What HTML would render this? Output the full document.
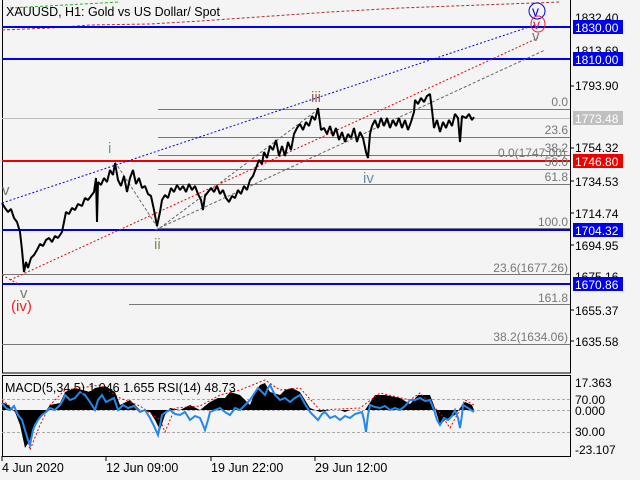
<!DOCTYPE html><html><head><style>
body{margin:0;background:#f4f4f4;width:640px;height:480px;overflow:hidden}
svg{display:block}
</style></head><body>
<svg width="640" height="480" xmlns="http://www.w3.org/2000/svg" font-family="Liberation Sans, sans-serif" font-size="12">
<rect width="640" height="480" fill="#f4f4f4"/>
<rect x="2.5" y="-1" width="568" height="374" fill="none" stroke="#000"/>
<rect x="2.5" y="375.5" width="568" height="81" fill="none" stroke="#000"/>
<polyline points="2,30 50,28 90,25 150,24 200,21 330,12 400,8 560,2" fill="none" stroke="#a33" stroke-dasharray="3,2"/>
<polyline points="10,8 120,2" fill="none" stroke="#3a3" stroke-dasharray="3,2"/>
<g stroke="#777" stroke-width="1">
<line x1="158" y1="109.5" x2="570" y2="109.5"/>
<line x1="158" y1="137.5" x2="570" y2="137.5"/>
<line x1="158" y1="155.5" x2="570" y2="155.5"/>
<line x1="158" y1="169.5" x2="570" y2="169.5"/>
<line x1="158" y1="184.5" x2="570" y2="184.5"/>
<line x1="158" y1="228.5" x2="570" y2="228.5"/>
<line x1="2" y1="274.5" x2="570" y2="274.5"/>
<line x1="129" y1="304.5" x2="570" y2="304.5"/>
<line x1="2" y1="344.5" x2="570" y2="344.5"/>
</g>
<line x1="2" y1="118.5" x2="570" y2="118.5" stroke="#bbb"/>
<g stroke-width="2">
<line x1="2" y1="27" x2="570" y2="27" stroke="#0000ee"/>
<line x1="2" y1="59" x2="570" y2="59" stroke="#0000ee"/>
<line x1="2" y1="230" x2="570" y2="230" stroke="#0000ee"/>
<line x1="2" y1="284" x2="570" y2="284" stroke="#0000ee"/>
<line x1="2" y1="161" x2="570" y2="161" stroke="#ee0000"/>
</g>
<line x1="2" y1="203" x2="535" y2="25" stroke="#0000ee" stroke-dasharray="2,2"/>
<line x1="10" y1="280" x2="538" y2="38" stroke="#ee0000" stroke-dasharray="2,2"/>
<line x1="2" y1="275" x2="20" y2="285" stroke="#ee0000" stroke-dasharray="2,2"/>
<line x1="155" y1="230" x2="545" y2="50" stroke="#666" stroke-dasharray="3,2"/>
<line x1="160" y1="228" x2="320" y2="108" stroke="#666" stroke-dasharray="3,2"/>
<line x1="115" y1="162" x2="158" y2="228" stroke="#666" stroke-dasharray="3,2"/>
<polyline fill="none" stroke="#000" stroke-width="2" stroke-linejoin="bevel" points="2,203 5,208 8,212 11,209 14,218 17,222 20,232 22,250 24,272 26,262 28,268 31,258 34,255 37,250 40,244 43,246 46,240 49,238 52,242 55,236 58,238 62,232 64,222 66,212 69,214 72,208 75,210 78,204 82,206 85,198 88,200 91,196 94,192 96,178 97,222 98,182 101,185 104,178 107,182 110,170 113,175 115,163 118,180 121,186 124,176 127,192 130,178 133,170 136,184 139,178 142,188 145,186 148,194 151,196 154,210 157,226 160,212 162,200 165,195 168,198 171,188 174,192 177,185 180,190 183,186 186,192 189,184 192,190 195,186 198,194 201,200 203,210 205,196 208,192 211,188 214,192 217,186 220,194 223,190 226,198 229,202 232,196 235,198 238,190 241,194 244,186 247,190 250,180 253,176 256,168 259,160 262,164 264,152 267,158 270,146 273,150 276,140 279,156 282,146 285,156 288,142 291,150 294,134 297,128 300,124 303,130 306,122 309,126 312,116 315,120 318,108 321,130 324,128 327,134 330,126 333,136 336,128 339,140 342,132 345,142 348,134 351,138 354,128 357,142 360,132 363,138 366,152 368,158 370,134 372,126 375,120 378,128 381,118 384,126 387,118 390,128 393,120 396,126 399,118 402,128 405,120 408,130 411,122 414,112 415,100 418,104 421,98 424,102 427,96 430,94 432,110 434,128 437,120 440,132 443,122 446,128 449,120 452,126 455,114 458,118 460,142 462,116 466,118 469,114 472,120 474,117"/>
<g style="font-size:15px" fill="#777">
<text x="2" y="195">v</text><text x="108" y="153" fill="#6699aa">i</text>
<text x="154" y="249" fill="#888855">ii</text><text x="311" y="102" fill="#996655">iii</text>
<text x="363" y="183" fill="#778899">iv</text>
<text x="20" y="298">v</text><text x="11" y="311" fill="#ee2222">(iv)</text>
<text x="532" y="41">v</text>
</g>
<circle cx="537" cy="11" r="8" fill="none" stroke="#0000ee"/><text x="532" y="16" style="font-size:14px" fill="#0000ee">v</text>
<ellipse cx="538" cy="24" rx="7" ry="8" fill="none" stroke="#ee2222"/><text x="533" y="29" style="font-size:14px" fill="#ee2222">v</text>
<g fill="#777" text-anchor="end">
<text x="568" y="106">0.0</text><text x="568" y="134">23.6</text><text x="568" y="152">38.2</text>
<text x="568" y="166">50.0</text><text x="568" y="181">61.8</text><text x="568" y="226">100.0</text>
<text x="568" y="272">23.6(1677.26)</text><text x="568" y="302">161.8</text><text x="568" y="341">38.2(1634.06)</text>
<text x="566" y="157">0.0(1747.00)</text>
</g>
<text x="6" y="16" style="font-size:12.5px">XAUUSD, H1:  Gold vs US Dollar/ Spot</text>
<g fill="#000">
<text x="575" y="22">1832.40</text><text x="575" y="55">1813.69</text><text x="575" y="90">1793.90</text>
<text x="575" y="152">1754.32</text><text x="575" y="186">1734.53</text><text x="575" y="218">1714.74</text>
<text x="575" y="250">1694.95</text><text x="575" y="281">1675.16</text><text x="575" y="315">1655.37</text>
<text x="575" y="346">1635.58</text>
<text x="575" y="387">17.363</text><text x="575" y="404">70.00</text><text x="575" y="415">0.000</text>
<text x="575" y="436">30.00</text><text x="575" y="454">-23.107</text>
</g>
<g stroke="#000"><line x1="570" y1="86" x2="574" y2="86"/><line x1="570" y1="148" x2="574" y2="148"/><line x1="570" y1="181" x2="574" y2="181"/><line x1="570" y1="213" x2="574" y2="213"/><line x1="570" y1="245" x2="574" y2="245"/><line x1="570" y1="310" x2="574" y2="310"/><line x1="570" y1="341" x2="574" y2="341"/></g>
<rect x="573" y="20" width="50" height="14" fill="#0000ee"/><text x="575" y="32" fill="#fff">1830.00</text>
<rect x="573" y="52" width="50" height="14" fill="#0000ee"/><text x="575" y="64" fill="#fff">1810.00</text>
<rect x="573" y="111" width="50" height="14" fill="#c0c0c0"/><text x="575" y="123" fill="#fff">1773.48</text>
<rect x="573" y="154" width="50" height="14" fill="#ee0000"/><text x="575" y="166" fill="#fff">1746.80</text>
<rect x="573" y="223" width="50" height="14" fill="#0000ee"/><text x="575" y="235" fill="#fff">1704.32</text>
<rect x="573" y="277" width="50" height="14" fill="#0000ee"/><text x="575" y="289" fill="#fff">1670.86</text>
<line x1="2" y1="399.5" x2="570" y2="399.5" stroke="#aaa" stroke-dasharray="3,2"/>
<line x1="2" y1="410.5" x2="570" y2="410.5" stroke="#aaa" stroke-dasharray="3,2"/>
<line x1="2" y1="432.5" x2="570" y2="432.5" stroke="#aaa" stroke-dasharray="3,2"/>
<polygon fill="#000" points="2,410 2,402 8,405 15,412 20,425 25,448 30,440 38,420 45,412 50,405 60,403 65,392 75,388 90,392 95,388 105,386 115,392 120,405 130,400 140,410 150,412 155,420 160,430 165,415 170,408 180,410 190,405 200,410 210,402 218,398 225,398 230,392 240,395 250,405 255,392 260,385 265,383 270,392 280,395 285,390 292,388 300,392 310,408 320,412 330,410 340,410 345,412 350,410 365,410 375,395 385,395 400,398 410,404 418,395 430,395 435,408 440,425 445,420 455,415 460,408 465,402 472,405 474,410"/>
<polyline fill="none" stroke="#ee0000" stroke-dasharray="2,2" points="2,400 15,410 22,420 30,450 40,425 50,405 65,390 80,388 100,385 120,398 140,406 160,420 165,432 175,408 200,406 220,395 240,390 265,380 280,390 300,388 320,410 360,408 380,393 410,400 420,393 440,413 450,428 465,400 474,405"/>
<polyline fill="none" stroke="#2288ee" stroke-width="2" points="2,403 6,408 10,410 14,406 18,415 22,420 25,430 28,440 30,445 33,430 35,425 38,420 42,415 46,412 50,408 55,410 60,405 63,400 65,395 70,400 75,398 80,392 85,395 90,402 95,410 98,400 102,395 106,402 110,400 114,398 118,410 123,405 128,408 134,406 140,412 145,410 150,418 154,426 158,435 160,425 162,415 166,412 170,410 175,414 180,415 185,412 190,420 195,416 200,418 203,425 205,430 208,420 210,412 215,410 220,408 225,412 230,415 235,408 240,410 245,405 250,400 254,394 258,388 262,392 265,395 268,388 270,385 275,395 280,400 285,398 290,402 295,398 300,395 305,404 310,412 314,416 318,420 322,414 325,412 330,418 335,416 340,420 345,416 350,418 355,414 362,412 364,420 366,432 368,415 370,405 375,407 380,408 385,406 390,410 395,408 400,410 405,406 410,400 415,400 420,398 425,401 430,400 434,410 437,420 440,425 444,418 448,420 452,416 455,410 458,418 460,428 462,415 463,405 468,408 474,412"/>
<text x="5" y="392" style="font-size:12.5px">MACD(5,34,5) 1.046 1.655 RSI(14) 48.73</text>
<g stroke="#000"><line x1="2" y1="456" x2="2" y2="461"/><line x1="106" y1="456" x2="106" y2="461"/><line x1="211" y1="456" x2="211" y2="461"/><line x1="315" y1="456" x2="315" y2="461"/></g>
<g style="font-size:12.5px"><text x="2" y="472">4 Jun 2020</text><text x="106" y="472">12 Jun 09:00</text>
<text x="211" y="472">19 Jun 22:00</text><text x="315" y="472">29 Jun 12:00</text></g>
</svg>
</body></html>
